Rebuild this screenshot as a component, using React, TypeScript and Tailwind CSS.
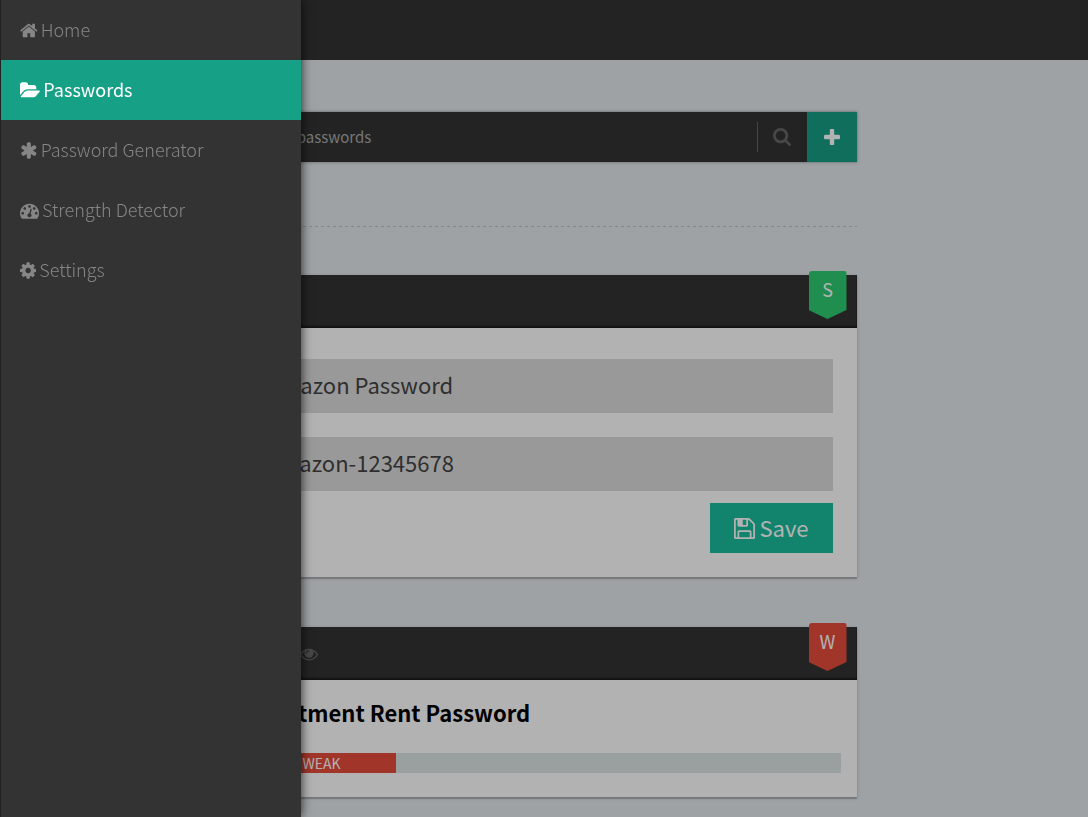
import React from "react";

type IconProps = { box: string; path: string; className: string };

function Icon({ box, path, className }: IconProps) {
  return (
    <svg viewBox={box} className={className} fill="currentColor" aria-hidden="true">
      <path d={path} />
    </svg>
  );
}

const icons = {
  home: {
    box: "64 0 1664 1792",
    path: "M1472 992v480q0 26-19 45t-45 19h-384v-384h-256v384h-384q-26 0-45-19t-19-45v-480q0-1 .5-3t.5-3l575-474 575 474q1 2 1 6zm223-69l-62 74q-8 9-21 11h-3q-13 0-21-7l-692-577-692 577q-12 8-24 7-13-2-21-11l-62-74q-8-10-7-23.5t11-21.5l719-599q32-26 76-26t76 26l244 204v-195q0-14 9-23t23-9h192q14 0 23 9t9 23v408l219 182q10 8 11 21.5t-7 23.5z",
  },
  folder: {
    box: "-64 0 1920 1792",
    path: "M1815 952q0 31-31 66l-336 396q-43 51-120.5 86.5t-143.5 35.5h-1088q-34 0-60.5-13t-26.5-43q0-31 31-66l336-396q43-51 120.5-86.5t143.5-35.5h1088q34 0 60.5 13t26.5 43zm-343-344v160h-832q-94 0-197 47.5t-164 119.5l-337 396-5 6q0-4-.5-12.5t-.5-12.5v-960q0-92 66-158t158-66h320q92 0 158 66t66 158v32h544q92 0 158 66t66 158z",
  },
  asterisk: {
    box: "64 0 1664 1792",
    path: "M1546 1050q46 26 59.5 77.5t-12.5 97.5l-64 110q-26 46-77.5 59.5t-97.5-12.5l-266-153v307q0 52-38 90t-90 38h-128q-52 0-90-38t-38-90v-307l-266 153q-46 26-97.5 12.5t-77.5-59.5l-64-110q-26-46-12.5-97.5t59.5-77.5l266-154-266-154q-46-26-59.5-77.5t12.5-97.5l64-110q26-46 77.5-59.5t97.5 12.5l266 153v-307q0-52 38-90t90-38h128q52 0 90 38t38 90v307l266-153q46-26 97.5-12.5t77.5 59.5l64 110q26 46 12.5 97.5t-59.5 77.5l-266 154z",
  },
  gauge: {
    box: "0 0 1792 1792",
    path: "M384 1152q0-53-37.5-90.5t-90.5-37.5-90.5 37.5-37.5 90.5 37.5 90.5 90.5 37.5 90.5-37.5 37.5-90.5zm192-448q0-53-37.5-90.5t-90.5-37.5-90.5 37.5-37.5 90.5 37.5 90.5 90.5 37.5 90.5-37.5 37.5-90.5zm428 481l101-382q6-26-7.5-48.5t-38.5-29.5-48 6.5-30 39.5l-101 382q-60 5-107 43.5t-63 98.5q-20 77 20 146t117 89 146-20 89-117q16-60-6-117t-72-91zm660-33q0-53-37.5-90.5t-90.5-37.5-90.5 37.5-37.5 90.5 37.5 90.5 90.5 37.5 90.5-37.5 37.5-90.5zm-640-640q0-53-37.5-90.5t-90.5-37.5-90.5 37.5-37.5 90.5 37.5 90.5 90.5 37.5 90.5-37.5 37.5-90.5zm448 192q0-53-37.5-90.5t-90.5-37.5-90.5 37.5-37.5 90.5 37.5 90.5 90.5 37.5 90.5-37.5 37.5-90.5zm320 448q0 261-141 483-19 29-54 29h-1402q-35 0-54-29-141-221-141-483 0-182 71-348t191-286 286-191 348-71 348 71 286 191 191 286 71 348z",
  },
  cog: {
    box: "128 0 1536 1792",
    path: "M1152 896q0-106-75-181t-181-75-181 75-75 181 75 181 181 75 181-75 75-181zm512-109v222q0 12-8 23t-20 13l-185 28q-19 54-39 91 35 50 107 138 10 12 10 25t-9 23q-27 37-99 108t-94 71q-12 0-26-9l-138-108q-44 23-91 38-16 136-29 186-7 28-36 28h-222q-14 0-24.5-8.5t-11.5-21.5l-28-184q-49-16-90-37l-141 107q-10 9-25 9-14 0-25-11-126-114-165-168-7-10-7-23 0-12 8-23 15-21 51-66.5t54-70.5q-27-50-41-99l-183-27q-13-2-21-12.5t-8-23.5v-222q0-12 8-23t19-13l186-28q14-46 39-92-40-57-107-138-10-12-10-24 0-10 9-23 26-36 98.5-107.5t94.5-71.5q13 0 26 10l138 107q44-23 91-38 16-136 29-186 7-28 36-28h222q14 0 24.5 8.5t11.5 21.5l28 184q49 16 90 37l142-107q9-9 24-9 13 0 25 10 129 119 165 170 7 8 7 22 0 12-8 23-15 21-51 66.5t-54 70.5q26 50 41 98l183 28q13 2 21 12.5t8 23.5z",
  },
  search: {
    box: "64 128 1664 1664",
    path: "M1216 832q0-185-131.5-316.5t-316.5-131.5-316.5 131.5-131.5 316.5 131.5 316.5 316.5 131.5 316.5-131.5 131.5-316.5zm512 832q0 52-38 90t-90 38q-54 0-90-38l-343-342q-179 124-399 124-143 0-273.5-55.5t-225-150-150-225-55.5-273.5 55.5-273.5 150-225 225-150 273.5-55.5 273.5 55.5 225 150 150 225 55.5 273.5q0 220-124 399l343 343q37 37 37 90z",
  },
  plus: {
    box: "192 128 1408 1408",
    path: "M1600 736v192q0 40-28 68t-68 28h-416v416q0 40-28 68t-68 28h-192q-40 0-68-28t-28-68v-416h-416q-40 0-68-28t-28-68v-192q0-40 28-68t68-28h416v-416q0-40 28-68t68-28h192q40 0 68 28t28 68v416h416q40 0 68 28t28 68z",
  },
  floppy: {
    box: "128 128 1536 1536",
    path: "M512 1536h768v-384h-768v384zm896 0h128v-896q0-14-10-38.5t-20-34.5l-281-281q-10-10-34-20t-39-10v416q0 40-28 68t-68 28h-576q-40 0-68-28t-28-68v-416h-128v1280h128v-416q0-40 28-68t68-28h832q40 0 68 28t28 68v416zm-384-928v-320q0-13-9.5-22.5t-22.5-9.5h-192q-13 0-22.5 9.5t-9.5 22.5v320q0 13 9.5 22.5t22.5 9.5h192q13 0 22.5-9.5t9.5-22.5zm640 32v928q0 40-28 68t-68 28h-1344q-40 0-68-28t-28-68v-1344q0-40 28-68t68-28h928q40 0 88 20t76 48l280 280q28 28 48 76t20 88z",
  },
  eye: {
    box: "0 0 1792 1792",
    path: "M1664 960q-152-236-381-353 61 104 61 225 0 185-131.5 316.5t-316.5 131.5-316.5-131.5-131.5-316.5q0-121 61-225-229 117-381 353 133 205 333.5 326.5t434.5 121.5 434.5-121.5 333.5-326.5zm-720-384q0-20-14-34t-34-14q-125 0-214.5 89.5t-89.5 214.5q0 20 14 34t34 14 34-14 14-34q0-86 61-147t147-61q20 0 34-14t14-34zm848 384q0 34-20 69-140 230-376.5 368.5t-499.5 138.5-499.5-139-376.5-368q-20-35-20-69t20-69q140-229 376.5-368t499.5-139 499.5 139 376.5 368q20 35 20 69z",
  },
};

const menu = [
  { label: "Home", icon: icons.home, active: false },
  { label: "Passwords", icon: icons.folder, active: true },
  { label: "Password Generator", icon: icons.asterisk, active: false },
  { label: "Strength Detector", icon: icons.gauge, active: false },
  { label: "Settings", icon: icons.cog, active: false },
];

function Drawer() {
  return (
    <nav className="fixed inset-y-0 left-0 z-20 w-[301px] border-l border-[#222222] bg-[#333333] shadow-[0_0_10px_rgba(0,0,0,0.8)]">
      <ul>
        {menu.map((item) => (
          <li key={item.label}>
            <a
              href="#"
              aria-current={item.active ? "page" : undefined}
              className={
                item.active
                  ? "flex h-15 items-center gap-[3px] bg-[#16a085] pl-[19px] text-lg text-white"
                  : "flex h-15 items-center gap-[3px] pl-[19px] text-lg font-light text-[#868686]"
              }
            >
              <Icon {...item.icon} className="h-[19px] w-auto" />
              <span className="pb-0.5">{item.label}</span>
            </a>
          </li>
        ))}
      </ul>
    </nav>
  );
}

function Badge({ letter, className }: { letter: string; className: string }) {
  return (
    <span
      className={`absolute -top-1 right-2.5 h-12 w-[38px] rounded-t-[3px] text-center text-lg leading-9 text-white [clip-path:polygon(0_0,100%_0,100%_81%,50%_100%,0_81%)] ${className}`}
    >
      {letter}
    </span>
  );
}

function Card({
  badge,
  tools,
  children,
}: {
  badge: React.ReactNode;
  tools?: React.ReactNode;
  children: React.ReactNode;
}) {
  return (
    <article className="mb-[50px] bg-white shadow-[0_2px_1px_rgba(0,0,0,0.15),0_1px_3px_rgba(0,0,0,0.2)]">
      <header className="relative flex h-[53px] items-center bg-[#333333] pl-4 shadow-[inset_0_-2px_2px_rgba(0,0,0,0.5)]">
        {tools}
        {badge}
      </header>
      {children}
    </article>
  );
}

export default function App() {
  return (
    <div className="relative h-screen overflow-hidden border-r border-white bg-[#e2e8eb] font-['Noto_Sans_CJK_SC','Noto_Sans',sans-serif]">
      <header className="h-15 bg-[#333333]" />
      <main className="mx-auto w-full max-w-[625px] pt-[52px]">
        <form className="flex h-[50px] bg-[#333333] shadow-[0_0_3px_rgba(0,0,0,0.4)]">
          <input
            type="search"
            aria-label="Search passwords"
            placeholder="Search passwords"
            className="min-w-0 flex-1 bg-transparent pl-[14px] text-[15px] outline-none placeholder:text-[#aaaaaa]"
          />
          <button type="button" aria-label="Search" className="flex w-[50px] items-center">
            <span className="h-[30px] w-px bg-[#666666]" />
            <span className="flex flex-1 justify-center text-[#666666]">
              <Icon {...icons.search} className="size-[18px]" />
            </span>
          </button>
          <button
            type="button"
            aria-label="Add password"
            className="flex w-[50px] items-center justify-center bg-[#16a085] text-white"
          >
            <Icon {...icons.plus} className="size-4" />
          </button>
        </form>
        <hr className="mt-16 mb-12 h-px border-0 bg-[repeating-linear-gradient(90deg,#bdc3c7_0_2px,transparent_2px_5px,#bdc3c7_5px_6px)]" />

        <Card badge={<Badge letter="S" className="bg-[#2ecc71]" />}>
          <form className="flex flex-col px-6 pt-[31px] pb-6">
            <input
              type="text"
              aria-label="Title"
              defaultValue="Amazon Password"
              className="h-[54px] bg-[#dcdcdc] px-[11px] pb-1 text-[22px] text-[#444444] outline-none"
            />
            <input
              type="text"
              aria-label="Password"
              defaultValue="amazon-12345678"
              className="mt-6 h-[54px] bg-[#dcdcdc] px-[11px] pb-1 text-[22px] text-[#444444] outline-none"
            />
            <button
              type="button"
              className="mt-3 flex h-[50px] items-center gap-1 self-end bg-[#1abc9c] px-6 text-[22px] text-white"
            >
              <Icon {...icons.floppy} className="size-[21px]" />
              <span className="pb-0.5">Save</span>
            </button>
          </form>
        </Card>

        <Card
          badge={<Badge letter="W" className="bg-[#e74c3c]" />}
          tools={
            <button type="button" aria-label="Show password" className="ml-[52px] text-[#666666]">
              <Icon {...icons.eye} className="size-[18px]" />
            </button>
          }
        >
          <div className="px-4 pt-4 pb-6">
            <h2 className="text-[22px] leading-8 font-bold text-black">Apartment Rent Password</h2>
            <div className="mt-[25px] h-5 bg-[#dde5e4]">
              <div className="h-5 w-1/4 bg-[#e74c3c] text-center text-sm leading-5 text-white">WEAK</div>
            </div>
          </div>
        </Card>
      </main>
      <div className="absolute inset-0 z-10 bg-black/30" />
      <Drawer />
    </div>
  );
}
